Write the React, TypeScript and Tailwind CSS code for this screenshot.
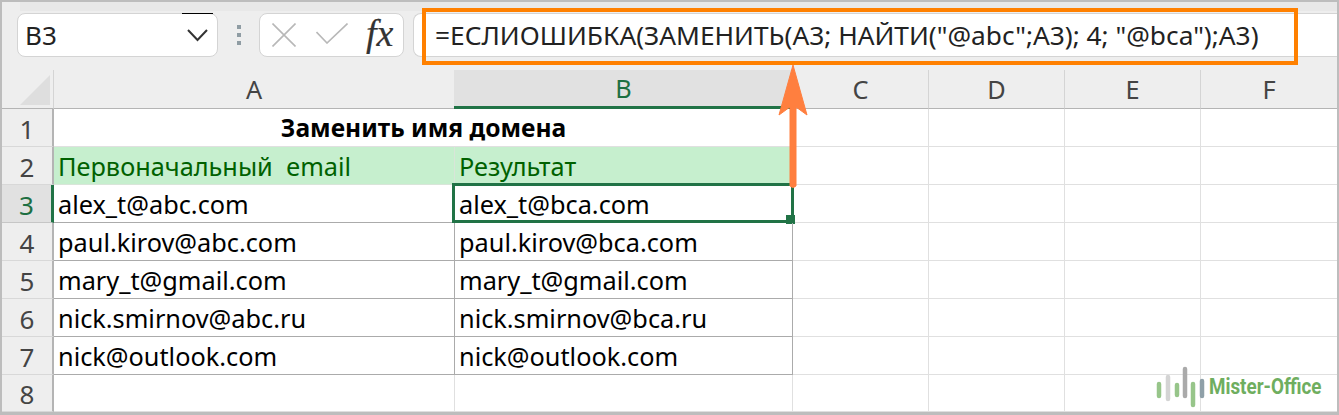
const rows = [
    ['alex_t@abc.com', 'alex_t@bca.com'],
    ['paul.kirov@abc.com', 'paul.kirov@bca.com'],
    ['mary_t@gmail.com', 'mary_t@gmail.com'],
    ['nick.smirnov@abc.ru', 'nick.smirnov@bca.ru'],
    ['nick@outlook.com', 'nick@outlook.com'],
];

const RowHead = ({ n, active }: { n: number; active?: boolean }) => (
    <div
        className={
            active
                ? 'flex items-center justify-center h-full pt-[2px] text-[26px] bg-[#e1e1e1] text-[#1d6f42] border-r-[3px] border-r-[#217346] border-b border-b-[#c6c6c6]'
                : 'flex items-center justify-center h-full pt-[2px] text-[26px] bg-[#eeeeee] text-[#444444] border-r-2 border-r-[#b4b4b4] border-b border-b-[#d8d8d8]'
        }
    >
        {n}
    </div>
);

const EmptyCells = () => (
    <>
        <div className="border-r border-b border-[#e0e0e0]" />
        <div className="border-r border-b border-[#e0e0e0]" />
        <div className="border-r border-b border-[#e0e0e0]" />
        <div className="border-b border-[#e0e0e0]" />
    </>
);

export default function App() {
    return (
        <div className="relative w-[1339px] h-[415px] overflow-hidden bg-white border-x-2 border-t-2 border-b-[3px] border-[#bdbdbd] font-['Noto_Sans',sans-serif] text-[25.3px] leading-none text-black">
            {/* toolbar */}
            <div className="relative h-[68px] bg-[#eeeeee] pt-[11px] pl-[15px] flex items-start">
                <div className="absolute left-[18px] right-0 top-0 h-[9px] bg-[#e8e8e8]" />
                <div className="relative w-[201px] h-[44px] bg-white border border-[#d4d4d4] rounded-[8px] flex items-center justify-between pl-[7px] pr-[9px] text-[#222222] text-[26px]">
                    <div className="absolute left-[164px] -top-[1px] w-[31px] h-[1px] bg-black" />
                    <span>B3</span>
                    <svg width="21" height="13" viewBox="0 0 21 13" fill="none" stroke="#333333" strokeWidth="2">
                        <path d="M1 1 L10.5 11 L20 1" />
                    </svg>
                </div>
                <div className="w-[4px] ml-[19px] mt-[12px] flex flex-col gap-[4px]">
                    <div className="h-[4px] bg-[#8f9ca3]" />
                    <div className="h-[4px] bg-[#8f9ca3]" />
                    <div className="h-[4px] bg-[#8f9ca3]" />
                </div>
                <div className="relative w-[145px] h-[44px] ml-[18px] bg-white border border-[#d4d4d4] rounded-[8px] flex items-center pl-[12px]">
                    <svg width="24" height="24" viewBox="0 0 24 24" fill="none" stroke="#b8b8b8" strokeWidth="1.6">
                        <path d="M0.5 0.5 L23.5 23.5 M23.5 0.5 L0.5 23.5" />
                    </svg>
                    <svg className="ml-[20px] -mt-[3px]" width="32" height="21" viewBox="0 0 32 21" fill="none" stroke="#b8b8b8" strokeWidth="1.6">
                        <path d="M0.5 9 L11 20 L31.5 0.5" />
                    </svg>
                    <span className="ml-[18px] font-['Liberation_Serif',serif] italic text-[38px] text-[#333333] [-webkit-text-stroke:0.2px_#333333] -mt-[4px]">fx</span>
                </div>
                <div className="relative flex-1 h-[44px] ml-[9px] bg-white border border-[#d4d4d4] rounded-l-[8px] border-r-0 flex items-center pl-[21px] text-[#222222] text-[26.3px] whitespace-nowrap">
                    =ЕСЛИОШИБКА(ЗАМЕНИТЬ(A3; НАЙТИ("@abc";A3); 4; "@bca");A3)
                </div>
            </div>

            {/* sheet */}
            <div className="grid grid-cols-[52px_401px_338px_136px_136px_136px_1fr] grid-rows-[39px_38px_38px_38px_38px_38px_38px_38px_37px]">
                <div className="relative bg-[#eeeeee] border-r border-r-[#d4d4d4] border-b border-b-[#b4b4b4]">
                    <div className="absolute right-[3px] bottom-[3px] w-0 h-0 border-l-[30px] border-l-transparent border-b-[30px] border-b-[#dedede]" />
                </div>
                <div className="flex items-center justify-center pt-[2px] bg-[#eeeeee] text-[#444444] border-r border-r-[#d4d4d4] border-b border-b-[#b4b4b4]">A</div>
                <div className="flex items-center justify-center pt-[2px] -ml-[1px] bg-[#e1e1e1] text-[#1d6f42] border-b-[3px] border-b-[#217346]">B</div>
                <div className="flex items-center justify-center pt-[2px] bg-[#eeeeee] text-[#444444] border-r border-r-[#d4d4d4] border-b border-b-[#b4b4b4]">C</div>
                <div className="flex items-center justify-center pt-[2px] bg-[#eeeeee] text-[#444444] border-r border-r-[#d4d4d4] border-b border-b-[#b4b4b4]">D</div>
                <div className="flex items-center justify-center pt-[2px] bg-[#eeeeee] text-[#444444] border-r border-r-[#d4d4d4] border-b border-b-[#b4b4b4]">E</div>
                <div className="flex items-center justify-center pt-[2px] bg-[#eeeeee] text-[#444444] border-b border-b-[#b4b4b4]">F</div>

                <RowHead n={1} />
                <div className="col-span-2 flex items-center justify-center pt-[1px] pl-[1px] font-bold text-[24.6px] border-r border-b border-[#e0e0e0]">Заменить имя домена</div>
                <EmptyCells />

                <RowHead n={2} />
                <div className="flex items-center pl-[4px] pt-[2px] bg-[#c6efce] text-[#006100] border-r border-b border-[#d9e5d9]">Первоначальный&nbsp; email</div>
                <div className="flex items-center pl-[4px] pt-[2px] bg-[#c6efce] text-[#006100] border-r border-b border-[#d9e5d9]">Результат</div>
                <EmptyCells />

                {rows.map((r, i) => (
                    <div key={i} className="contents">
                        <RowHead n={i + 3} active={i === 0} />
                        <div className="flex items-center pl-[4px] pt-[2px] border-r border-b border-[#ababab]">{r[0]}</div>
                        <div className="relative flex items-center pl-[4px] pt-[2px] border-r border-b border-[#ababab]">
                            {r[1]}
                            {i === 0 && (
                                <div className="absolute -left-[3px] -right-[2px] -top-[2px] -bottom-[1px] border-[3px] border-[#217346]">
                                    <div className="absolute -right-[4px] -bottom-[4px] w-[9px] h-[9px] bg-[#217346]" />
                                </div>
                            )}
                        </div>
                        <EmptyCells />
                    </div>
                ))}

                <RowHead n={8} />
                <div className="border-r border-b border-[#e0e0e0]" />
                <div className="border-r border-b border-[#e0e0e0]" />
                <EmptyCells />
            </div>

            {/* orange callout */}
            <div className="absolute left-[420px] top-[6px] w-[876px] h-[57px] border-[4px] border-[#ff8000]" />
            <svg className="absolute left-[771px] top-[62px]" width="40" height="128" viewBox="0 0 40 128" fill="#ff7f3f">
                <path d="M20 1 L34 51 L23 43 L23 122 Q20 125 17 122 L17 43 L6 51 Z" stroke="#ff7f3f" strokeLinejoin="round" />
            </svg>

            {/* watermark */}
            <div className="absolute left-[1154px] top-[363px] flex items-center gap-[3px]">
                <svg className="shrink-0" width="50" height="44" viewBox="0 0 50 44" fill="none" strokeLinecap="round" strokeWidth="4.5">
                    <path d="M3 19 V31" stroke="#97c58a" />
                    <path d="M12 12 V34" stroke="#d4d4d4" />
                    <path d="M21 20 V30" stroke="#97c58a" />
                    <path d="M29 4 V31" stroke="#aaaaaa" />
                    <path d="M37 19 V40" stroke="#97c58a" />
                    <path d="M46 16 V31" stroke="#8fa0a8" />
                </svg>
                <span className="font-['Roboto',sans-serif] font-bold text-[22px] text-[#6fae5f] whitespace-nowrap origin-left scale-x-[0.855]">Mister-Office</span>
            </div>
        </div>
    );
}
